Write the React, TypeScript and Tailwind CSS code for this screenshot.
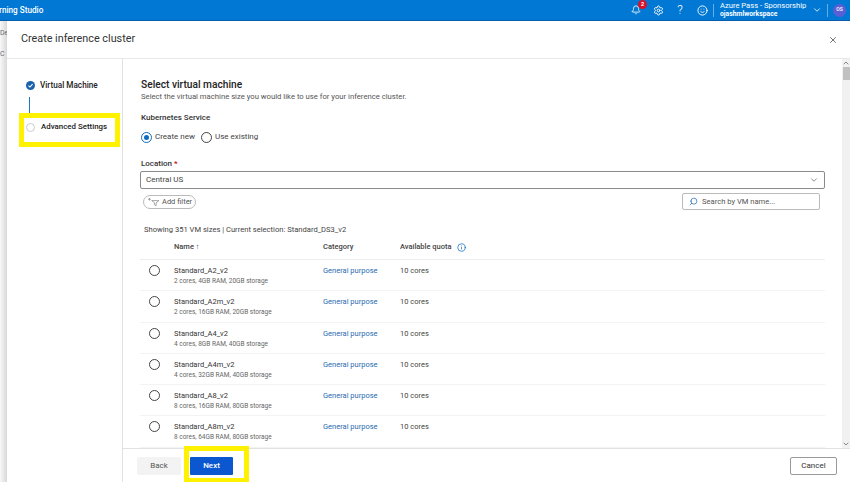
import { Bell, ChevronDown, ChevronUp, Info, Search, Settings, Smile, X } from "lucide-react"

const vmSizes = [
  { name: "Standard_A2_v2", spec: "2 cores, 4GB RAM, 20GB storage" },
  { name: "Standard_A2m_v2", spec: "2 cores, 16GB RAM, 20GB storage" },
  { name: "Standard_A4_v2", spec: "4 cores, 8GB RAM, 40GB storage" },
  { name: "Standard_A4m_v2", spec: "4 cores, 32GB RAM, 40GB storage" },
  { name: "Standard_A8_v2", spec: "8 cores, 16GB RAM, 80GB storage" },
  { name: "Standard_A8m_v2", spec: "8 cores, 64GB RAM, 80GB storage" },
]

function TopBar() {
  return (
    <div className="flex h-[21px] shrink-0 items-center justify-between border-b border-[#0a5ea8] bg-[#0078d4] text-white">
      <span className="-ml-[1px] text-[8.2px] font-medium">rning Studio</span>
      <div className="flex items-center">
        <div className="flex w-[22px] justify-center">
          <div className="relative">
            <Bell className="h-[10px] w-[10px]" />
            <span className="absolute -right-[6px] -top-[5px] flex h-[9px] w-[9px] items-center justify-center rounded-full bg-[#d9122c] text-[5.5px] font-bold">2</span>
          </div>
        </div>
        <div className="flex w-[22px] justify-center"><Settings className="h-[11px] w-[11px]" /></div>
        <div className="flex w-[22px] justify-center text-[12px] font-light leading-[12px]">?</div>
        <div className="flex w-[22px] justify-center"><Smile className="h-[11px] w-[11px]" /></div>
        <div className="h-[13px] w-px bg-[#66aee6]" />
        <div className="ml-[6px] flex w-[86px] flex-col leading-[9px]">
          <span className="whitespace-nowrap text-[7.6px]">Azure Pass - Sponsorship</span>
          <span className="whitespace-nowrap text-[6.8px] font-bold">ojashmlworkspace</span>
        </div>
        <div className="flex w-[21px] justify-center"><ChevronDown className="h-[10px] w-[10px]" /></div>
        <div className="h-[13px] w-px bg-[#66aee6]" />
        <div className="ml-[5px] mr-[4px] flex h-[13px] w-[13px] items-center justify-center rounded-full bg-[#5b5fd6] text-[5px] font-medium">OS</div>
      </div>
    </div>
  )
}

function Radio({ checked }: { checked?: boolean }) {
  return (
    <span className={`flex h-[11px] w-[11px] shrink-0 items-center justify-center rounded-full border ${checked ? "border-[#0f6cbd]" : "border-[#444]"}`}>
      {checked && <span className="h-[5px] w-[5px] rounded-full bg-[#0f6cbd]" />}
    </span>
  )
}

function StepNav() {
  return (
    <div className="relative w-[116px] shrink-0 border-r border-[#e1e1e1] pl-[19px] pt-[20px]">
      <div className="flex items-center gap-[5px]">
        <span className="flex h-[9px] w-[9px] items-center justify-center rounded-full bg-[#1a62ab]">
          <svg viewBox="0 0 10 10" className="h-[7px] w-[7px]" fill="none" stroke="white" strokeWidth="1.5">
            <path d="M2 5.2 4.2 7.3 8 3" />
          </svg>
        </span>
        <span className="text-[8.2px] font-medium text-[#222]">Virtual Machine</span>
      </div>
      <div className="ml-[3px] mt-[6px] h-[16px] w-px bg-[#1f77c9]" />
      <div className="mt-[8px] flex items-center gap-[6px]">
        <span className="h-[9px] w-[9px] rounded-full border border-[#ccc]" />
        <span className="text-[7.9px] font-medium text-[#222]">Advanced Settings</span>
      </div>
      <div className="absolute left-[12px] top-[54px] h-[34px] w-[101px] border-[5px] border-[#fff200]" />
    </div>
  )
}

function VmTable() {
  return (
    <div>
      <div className="flex h-[25px] items-center border-b border-[#eee] text-[7.5px] font-medium text-[#444]">
        <span className="ml-[34px] w-[149px]">Name ↑</span>
        <span className="w-[77px]">Category</span>
        <span className="flex items-center gap-[5px]">
          Available quota
          <Info className="h-[9px] w-[9px] text-[#0f6cbd]" />
        </span>
      </div>
      {vmSizes.map((vm) => (
        <div key={vm.name} className="flex h-[31.3px] items-start border-b border-[#f3f3f3] pt-[5px]">
          <span className="ml-[9px] w-[25px]"><Radio /></span>
          <div className="w-[149px]">
            <div className="text-[7.5px] leading-[11px] text-[#333]">{vm.name}</div>
            <div className="text-[6.5px] leading-[10px] text-[#666]">{vm.spec}</div>
          </div>
          <span className="w-[77px] text-[7.5px] leading-[11px] text-[#2a6cb0]">General purpose</span>
          <span className="text-[7.5px] leading-[11px] text-[#444]">10 cores</span>
        </div>
      ))}
    </div>
  )
}

function MainPane() {
  return (
    <div className="flex min-h-0 flex-1">
      <div className="min-w-0 flex-1 overflow-hidden pl-[17px] pr-[17px] pt-[19px]">
        <h2 className="pl-[1px] text-[10.2px] font-medium leading-[13px] text-[#222]">Select virtual machine</h2>
        <p className="pl-[1px] text-[7.7px] leading-[11px] text-[#555]">Select the virtual machine size you would like to use for your inference cluster.</p>
        <div className="mt-[10px] pl-[1px] text-[8px] font-medium leading-[12px] text-[#333]">Kubernetes Service</div>
        <div className="mt-[7px] flex items-center pl-[1px] text-[8px] leading-[12px] text-[#444]">
          <Radio checked />
          <span className="ml-[3px] mr-[6px]">Create new</span>
          <Radio />
          <span className="ml-[3px]">Use existing</span>
        </div>
        <div className="mt-[15px] pl-[1px] text-[8px] font-medium leading-[12px] text-[#333]">Location <span className="text-[#c00]">*</span></div>
        <div className="mt-[1px] flex h-[18px] items-center justify-between rounded-[2px] border border-[#8a8a8a] px-[5px] text-[8px] text-[#444]">
          Central US
          <ChevronDown className="h-[10px] w-[10px] text-[#777]" />
        </div>
        <div className="mt-[4px] flex items-center justify-between pr-[5px]">
          <div className="ml-[3px] flex h-[14px] w-[53px] items-center gap-[2px] rounded-full border border-[#bbb] pl-[3px] text-[7.5px] text-[#555]">
            <svg viewBox="0 0 14 10" className="h-[9px] w-[13px]" fill="none" stroke="#777" strokeWidth="0.7">
              <path d="M1 2.5H4M2.5 1V4M5 4H13L10 6.3V9.5L8 8.6V6.3Z" />
            </svg>
            Add filter
          </div>
          <div className="flex h-[17px] w-[138px] items-center gap-[4px] rounded-[2px] border border-[#bbb] px-[6px] text-[7.6px] text-[#555]">
            <Search className="h-[9px] w-[9px] -scale-x-100 text-[#2a6cb0]" />
            Search by VM name...
          </div>
        </div>
        <div className="ml-[4px] mt-[14px] text-[7.6px] leading-[11px] text-[#444]">Showing 351 VM sizes | Current selection: Standard_DS3_v2</div>
        <VmTable />
      </div>
      <div className="flex w-[8px] shrink-0 flex-col items-center bg-[#f1f1f1]">
        <ChevronUp className="h-[8px] w-[8px] text-[#555]" />
        <div className="h-[13px] w-[7px] bg-[#c1c1c1]" />
        <div className="flex-1" />
        <ChevronDown className="h-[8px] w-[8px] text-[#555]" />
      </div>
    </div>
  )
}

function Footer() {
  return (
    <div className="relative flex h-[34px] shrink-0 items-center border-t border-[#e1e1e1] pl-[14px] pr-[13px]">
      <button className="h-[18px] w-[44px] rounded-[2px] bg-[#f3f3f3] text-[8px] text-[#555]">Back</button>
      <button className="ml-[9px] h-[18px] w-[43px] rounded-[1px] bg-[#0b57d0] text-[8px] font-medium text-white">Next</button>
      <button className="ml-auto h-[18px] w-[47px] rounded-[2px] border border-[#999] text-[8px] text-[#333]">Cancel</button>
      <div className="absolute left-[61px] top-[-3px] h-[37px] w-[65px] border-[5px] border-[#fff200]" />
    </div>
  )
}

export default function App() {
  return (
    <div className="flex h-[482px] w-[850px] flex-col overflow-hidden bg-white font-['Roboto',sans-serif]">
      <TopBar />
      <div className="flex min-h-0 flex-1">
        <div className="w-[7px] shrink-0 overflow-hidden bg-linear-to-r from-[#f8f8f8] to-[#d8d8d8] pt-[4px] text-[7px] leading-[16px] text-[#667]">
          <div>De</div>
          <div className="mt-[5px]">C</div>
        </div>
        <div className="flex min-w-0 flex-1 flex-col">
          <div className="flex h-[38px] shrink-0 items-center justify-between border-b border-[#e8e8e8] pl-[14px] pr-[12px]">
            <h1 className="text-[10.8px] text-[#333]">Create inference cluster</h1>
            <X className="h-[10px] w-[10px] text-[#555]" />
          </div>
          <div className="flex min-h-0 flex-1">
            <StepNav />
            <div className="flex min-w-0 flex-1 flex-col">
              <MainPane />
              <Footer />
            </div>
          </div>
        </div>
      </div>
    </div>
  )
}
